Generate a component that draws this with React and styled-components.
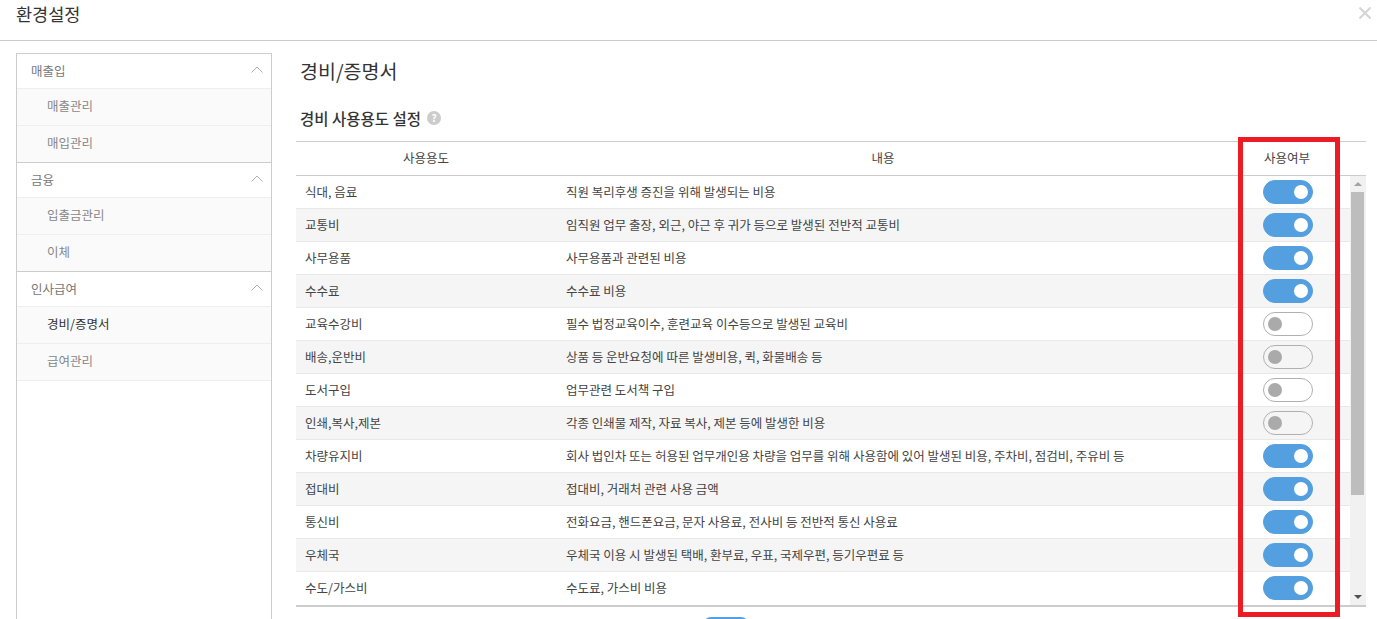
import React from 'react';
import styled, { createGlobalStyle } from 'styled-components';

const menuGroups = [
  { title: '매출입', items: ['매출관리', '매입관리'] },
  { title: '금융', items: ['입출금관리', '이체'] },
  { title: '인사급여', items: ['경비/증명서', '급여관리'] },
];

const usageRows = [
  ['식대, 음료', '직원 복리후생 증진을 위해 발생되는 비용', true],
  ['교통비', '임직원 업무 출장, 외근, 야근 후 귀가 등으로 발생된 전반적 교통비', true],
  ['사무용품', '사무용품과 관련된 비용', true],
  ['수수료', '수수료 비용', true],
  ['교육수강비', '필수 법정교육이수, 훈련교육 이수등으로 발생된 교육비', false],
  ['배송,운반비', '상품 등 운반요청에 따른 발생비용, 퀵, 화물배송 등', false],
  ['도서구입', '업무관련 도서책 구입', false],
  ['인쇄,복사,제본', '각종 인쇄물 제작, 자료 복사, 제본 등에 발생한 비용', false],
  ['차량유지비', '회사 법인차 또는 허용된 업무개인용 차량을 업무를 위해 사용함에 있어 발생된 비용, 주차비, 점검비, 주유비 등', true],
  ['접대비', '접대비, 거래처 관련 사용 금액', true],
  ['통신비', '전화요금, 핸드폰요금, 문자 사용료, 전사비 등 전반적 통신 사용료', true],
  ['우체국', '우체국 이용 시 발생된 택배, 환부료, 우표, 국제우편, 등기우편료 등', true],
  ['수도/가스비', '수도료, 가스비 비용', true],
];

const App = () => (
  <>
    <GlobalStyle />
    <Page>
      <Header>
        <HeaderTitle>환경설정</HeaderTitle>
        <CloseIcon viewBox="0 0 12 12">
          <path d="M0.5 0.5 L11.5 11.5 M11.5 0.5 L0.5 11.5" />
        </CloseIcon>
      </Header>
      <Body>
        <Sidebar>
          {menuGroups.map(group => (
            <Group key={group.title}>
              <GroupHead>
                {group.title}
                <Chevron viewBox="0 0 12 7">
                  <path d="M0.5 6.5 L6 1 L11.5 6.5" />
                </Chevron>
              </GroupHead>
              {group.items.map(item => (
                <SubItem key={item} $active={item === '경비/증명서'}>{item}</SubItem>
              ))}
            </Group>
          ))}
        </Sidebar>
        <Main>
          <PageTitle>경비/증명서</PageTitle>
          <SectionTitle>
            경비 사용용도 설정
            <HelpBadge>?</HelpBadge>
          </SectionTitle>
          <TableHead>
            <span>사용용도</span>
            <span>내용</span>
            <span>사용여부</span>
          </TableHead>
          <TableBody>
            <Rows>
              {usageRows.map(([name, desc, on]) => (
                <Row key={name}>
                  <NameCell>{name}</NameCell>
                  <DescCell>{desc}</DescCell>
                  <Toggle $on={on} />
                </Row>
              ))}
            </Rows>
            <Scrollbar>
              <ArrowUp />
              <Track>
                <Thumb />
              </Track>
              <ArrowDown />
            </Scrollbar>
          </TableBody>
          <Footer>
            <SaveButton aria-label="save" />
          </Footer>
          <Highlight />
        </Main>
      </Body>
    </Page>
  </>
);

const GlobalStyle = createGlobalStyle`
  html, body {
    margin: 0;
    height: 100%;
    overflow: hidden;
    background: #fff;
  }
  body {
    font-family: "Noto Sans CJK KR", "Noto Sans", sans-serif;
    font-size: 12.5px;
    color: #444;
  }
`;

const Page = styled.div`
  width: 1377px;
  height: 619px;
  overflow: hidden;
`;

const Header = styled.header`
  height: 40px;
  box-sizing: content-box;
  border-bottom: 1px solid #ccc;
  display: flex;
  justify-content: space-between;
  padding: 0 6px 0 16px;
`;

const HeaderTitle = styled.h1`
  margin: 0;
  font-size: 17.5px;
  font-weight: 400;
  line-height: 28px;
  color: #333;
`;

const CloseIcon = styled.svg`
  width: 12px;
  height: 12px;
  margin-top: 7px;
  fill: none;
  stroke: #d4d4d4;
  stroke-width: 2;
`;

const Body = styled.div`
  display: flex;
  padding: 12px 11px 0 16px;
  gap: 24px;
`;

const Sidebar = styled.nav`
  width: 256px;
  height: 600px;
  flex: none;
  box-sizing: border-box;
  border: 1px solid #ccc;
`;

const Group = styled.div`
  border-bottom: 1px solid #ccc;

  &:last-child {
    border-bottom: none;
  }
`;

const GroupHead = styled.div`
  height: 33px;
  padding: 0 8px 1px 14px;
  border-bottom: 1px solid #eee;
  display: flex;
  justify-content: space-between;
  align-items: center;
  color: #777;
`;

const Chevron = styled.svg`
  width: 12px;
  height: 7px;
  margin-top: -2px;
  fill: none;
  stroke: #999;
  stroke-width: 0.8;
`;

const SubItem = styled.div`
  height: 36px;
  line-height: 33px;
  padding-left: 30px;
  background: #fafafa;
  border-bottom: 1px solid #eee;
  color: ${props => (props.$active ? '#333' : '#888')};

  &:last-child {
    border-bottom: none;
  }

  ${Group}:last-child &:last-child {
    border-bottom: 1px solid #eee;
  }
`;

const Main = styled.main`
  flex: 1;
  position: relative;
  min-width: 0;
`;

const PageTitle = styled.h2`
  margin: 3px 0 0 4px;
  font-size: 19.5px;
  font-weight: 400;
  line-height: 30px;
  color: #333;
`;

const SectionTitle = styled.h3`
  margin: 19px 0 0 4px;
  height: 26px;
  font-size: 15.5px;
  font-weight: 500;
  line-height: 26px;
  color: #333;
  display: flex;
  align-items: center;
  gap: 6px;
`;

const HelpBadge = styled.span`
  width: 14px;
  height: 14px;
  border-radius: 50%;
  background: #ccc;
  color: #fff;
  font-size: 10px;
  font-weight: 700;
  line-height: 14px;
  text-align: center;
`;

const TableHead = styled.div`
  margin-top: 10px;
  height: 31px;
  padding: 0 2px 2px 0;
  border-top: 1px solid #ccc;
  border-bottom: 1px solid #ccc;
  display: grid;
  grid-template-columns: 260px 654px 1fr;
  align-items: center;
  text-align: center;
  color: #444;
`;

const TableBody = styled.div`
  display: flex;
  height: 429px;
  border-bottom: 2px solid #ccc;
`;

const Rows = styled.div`
  width: 1054px;
  flex: none;
`;

const Row = styled.div`
  height: 32px;
  border-bottom: 1px solid #e8e8e8;
  display: grid;
  grid-template-columns: 270px 697px 50px;
  align-items: center;
  color: #444;

  &:nth-child(even) {
    background: #f5f5f5;
  }

  &:last-child {
    border-bottom: none;
  }
`;

const NameCell = styled.span`
  padding-left: 9px;
  margin-bottom: 2px;
`;

const DescCell = styled.span`
  margin-bottom: 2px;
`;

const Toggle = styled.span`
  width: 50px;
  height: 24px;
  box-sizing: border-box;
  border-radius: 12px;
  border: 1px solid ${props => (props.$on ? '#539fe0' : '#b0b0b0')};
  background: ${props => (props.$on ? '#539fe0' : 'transparent')};
  display: flex;
  align-items: center;
  justify-content: ${props => (props.$on ? 'flex-end' : 'flex-start')};
  padding: 0 4px;

  &::after {
    content: '';
    width: 14px;
    height: 14px;
    border-radius: 50%;
    background: ${props => (props.$on ? '#fff' : '#aaa')};
  }
`;

const Scrollbar = styled.div`
  width: 16px;
  flex: none;
  background: #f1f1f1;
  display: flex;
  flex-direction: column;
  align-items: center;
`;

const ArrowUp = styled.div`
  margin: 6px 0 6px;
  width: 0;
  height: 0;
  border-left: 4px solid transparent;
  border-right: 4px solid transparent;
  border-bottom: 4px solid #a3a3a3;
`;

const ArrowDown = styled.div`
  margin: 0 0 6px;
  width: 0;
  height: 0;
  border-left: 4px solid transparent;
  border-right: 4px solid transparent;
  border-top: 4px solid #505050;
`;

const Track = styled.div`
  flex: 1;
  width: 100%;
`;

const Thumb = styled.div`
  width: 13px;
  height: 303px;
  margin-left: 1px;
  background: #bdbdbd;
`;

const Footer = styled.div`
  display: flex;
  padding: 10px 0 0 407px;
`;

const SaveButton = styled.button`
  width: 46px;
  height: 30px;
  border: none;
  border-radius: 8px;
  background: #539fe0;
`;

const Highlight = styled.div`
  position: absolute;
  left: 942px;
  top: 84px;
  width: 102px;
  height: 480px;
  box-sizing: border-box;
  border: 5px solid #ed1c24;
  pointer-events: none;
`;

export default App;
